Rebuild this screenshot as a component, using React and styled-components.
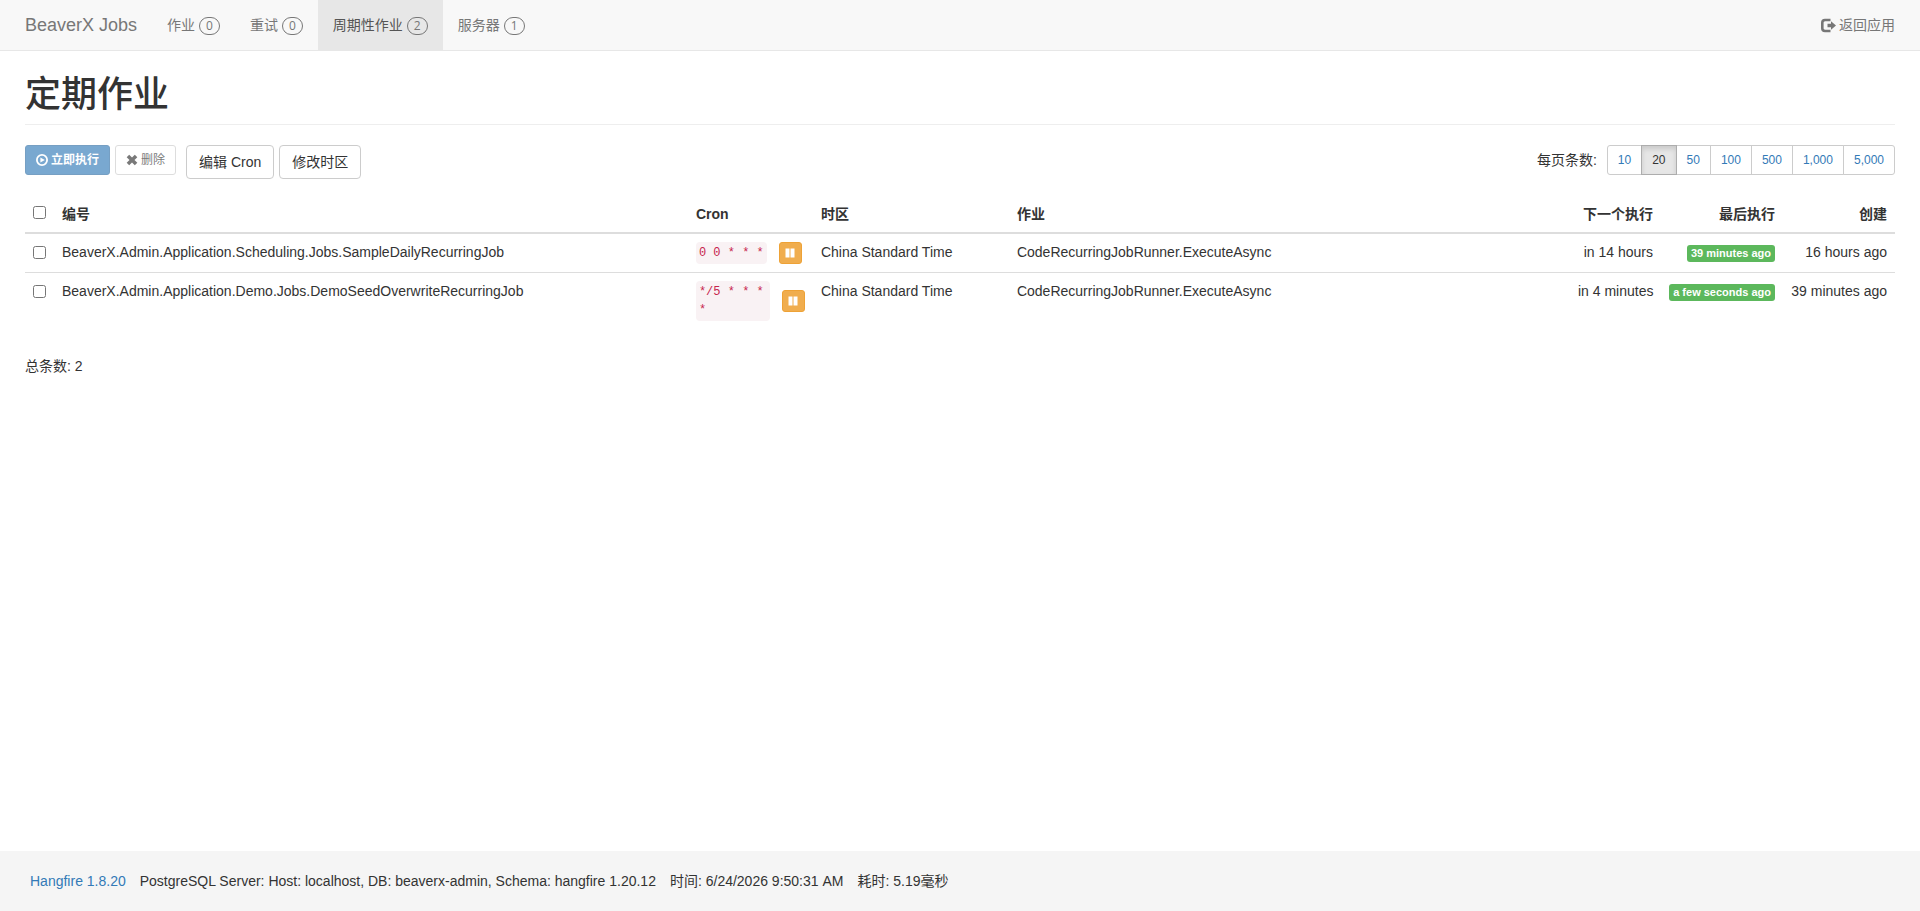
import React, { useState } from "react";
import styled, { createGlobalStyle } from "styled-components";

const navItems = [
  { label: "作业", count: 0 },
  { label: "重试", count: 0 },
  { label: "周期性作业", count: 2, active: true },
  { label: "服务器", count: 1 },
];

const pageSizes = ["10", "20", "50", "100", "500", "1,000", "5,000"];

const jobs = [
  {
    id: "BeaverX.Admin.Application.Scheduling.Jobs.SampleDailyRecurringJob",
    cron: "0 0 * * *",
    timeZone: "China Standard Time",
    job: "CodeRecurringJobRunner.ExecuteAsync",
    next: "in 14 hours",
    last: "39 minutes ago",
    created: "16 hours ago",
  },
  {
    id: "BeaverX.Admin.Application.Demo.Jobs.DemoSeedOverwriteRecurringJob",
    cron: "*/5 * * * *",
    timeZone: "China Standard Time",
    job: "CodeRecurringJobRunner.ExecuteAsync",
    next: "in 4 minutes",
    last: "a few seconds ago",
    created: "39 minutes ago",
  },
];

const PlayCircleIcon = () => (
  <Icon viewBox="0 0 12 12" $size={12} aria-hidden="true">
    <circle cx="6" cy="6" r="5.1" fill="none" stroke="currentColor" strokeWidth="1.8" />
    <path d="M4.4 3.4v5.2L8.8 6z" fill="currentColor" />
  </Icon>
);

const RemoveIcon = () => (
  <Icon viewBox="0 0 12 12" $size={12} aria-hidden="true">
    <path
      d="M3.2 .8 6 3.5 8.800 .8 11.300 3.200 8.500 6 11.300 8.800 8.800 11.200 6 8.500 3.200 11.200 .7 8.800 3.500 6 .7 3.200z"
      fill="currentColor"
    />
  </Icon>
);

const PauseIcon = () => (
  <Icon viewBox="0 0 12 12" $size={12} aria-hidden="true">
    <path d="M1.500 1.500h4v9h-4zM6.500 1.500h4v9h-4z" fill="currentColor" />
  </Icon>
);

const LogOutIcon = () => (
  <Icon viewBox="0 0 15 14" $size={15} aria-hidden="true">
    <path
      d="M9.500 1.500H4A2.700 2.700 0 0 0 1.300 4.200v5.600A2.700 2.700 0 0 0 4 12.500h5.500"
      fill="none"
      stroke="currentColor"
      strokeWidth="2.600"
    />
    <path d="M6.500 5.200h3.500V2.800L15 7l-5 4.200V8.800H6.500z" fill="currentColor" />
  </Icon>
);

const App = () => {
  const [selected, setSelected] = useState([]);
  const [perPage, setPerPage] = useState("20");

  const toggleJob = (id) => {
    setSelected(
      selected.includes(id) ? selected.filter((x) => x !== id) : [...selected, id]
    );
  };

  const toggleAll = () => {
    setSelected(selected.length === jobs.length ? [] : jobs.map((j) => j.id));
  };

  return (
    <Page>
      <GlobalStyle />
      <Navbar>
        <Brand href="#">BeaverX Jobs</Brand>
        <NavList>
          {navItems.map((item) => (
            <li key={item.label}>
              <NavLink href="#" $active={item.active}>
                {item.label}
                <Metric>{item.count}</Metric>
              </NavLink>
            </li>
          ))}
        </NavList>
        <BackLink href="#">
          <LogOutIcon />
          返回应用
        </BackLink>
      </Navbar>

      <Main>
        <Title>定期作业</Title>
        <Toolbar>
          <Group>
            <SmallButton $primary disabled={selected.length === 0}>
              <PlayCircleIcon />
              立即执行
            </SmallButton>
            <SmallButton disabled={selected.length === 0}>
              <RemoveIcon />
              删除
            </SmallButton>
          </Group>
          <Group>
            <Button>编辑 Cron</Button>
            <Button>修改时区</Button>
          </Group>
          <PerPage>
            每页条数:
            <Pager>
              {pageSizes.map((size) => (
                <PageSize
                  href="#"
                  key={size}
                  $active={size === perPage}
                  onClick={() => setPerPage(size)}
                >
                  {size}
                </PageSize>
              ))}
            </Pager>
          </PerPage>
        </Toolbar>

        <Table>
          <colgroup>
            <Col $width="29px" />
            <Col $width="33.9%" />
            <Col $width="125px" />
            <Col $width="196px" />
            <Col />
            <Col $width="91px" />
            <Col $width="122px" />
            <Col $width="112px" />
          </colgroup>
          <thead>
            <tr>
              <Th>
                <Checkbox
                  $head
                  aria-label="全选"
                  checked={selected.length === jobs.length}
                  onChange={toggleAll}
                />
              </Th>
              <Th>编号</Th>
              <Th>Cron</Th>
              <Th>时区</Th>
              <Th>作业</Th>
              <Th $right>下一个执行</Th>
              <Th $right>最后执行</Th>
              <Th $right>创建</Th>
            </tr>
          </thead>
          <tbody>
            {jobs.map((item) => (
              <tr key={item.id}>
                <Td>
                  <Checkbox
                    aria-label={item.id}
                    checked={selected.includes(item.id)}
                    onChange={() => toggleJob(item.id)}
                  />
                </Td>
                <Td>{item.id}</Td>
                <Td>
                  <CronCell>
                    <Code>{item.cron}</Code>
                    <PauseButton aria-label="暂停">
                      <PauseIcon />
                    </PauseButton>
                  </CronCell>
                </Td>
                <Td>{item.timeZone}</Td>
                <Td>{item.job}</Td>
                <Td $right>{item.next}</Td>
                <Td $right>
                  <Label>{item.last}</Label>
                </Td>
                <Td $right>{item.created}</Td>
              </tr>
            ))}
          </tbody>
        </Table>
        <Total>总条数: {jobs.length}</Total>
      </Main>

      <Footer>
        <a href="#">Hangfire 1.8.20</a>
        <span>PostgreSQL Server: Host: localhost, DB: beaverx-admin, Schema: hangfire 1.20.12</span>
        <span>时间: 6/24/2026 9:50:31 AM</span>
        <span>耗时: 5.19毫秒</span>
      </Footer>
    </Page>
  );
};

const GlobalStyle = createGlobalStyle`
  * {
    box-sizing: border-box;
  }

  body {
    margin: 0;
    background-color: #fff;
    color: #333;
    font-family: "Liberation Sans", "Noto Sans CJK SC", sans-serif;
    font-size: 14px;
    line-height: 20px;
  }

  a {
    color: #337ab7;
    text-decoration: none;
  }

  button {
    font-family: inherit;
  }
`;

const Page = styled.div`
  display: flex;
  flex-direction: column;
  min-height: 100vh;
`;

const Icon = styled.svg`
  flex: none;
  width: ${({ $size }) => $size}px;
  height: ${({ $size }) => $size}px;
`;

const Navbar = styled.nav`
  display: flex;
  height: 51px;
  padding: 0 25px;
  background-color: #f8f8f8;
  border-bottom: 1px solid #e7e7e7;
`;

const Brand = styled.a`
  padding: 15px 15px 15px 0;
  color: #777;
  font-size: 18px;
`;

const NavList = styled.ul`
  display: flex;
  margin: 0;
  padding: 0;
  list-style: none;
`;

const NavLink = styled.a`
  display: flex;
  align-items: center;
  gap: 4px;
  height: 50px;
  padding: 0 15px;
  color: ${({ $active }) => ($active ? "#555" : "#777")};
  background-color: ${({ $active }) => ($active ? "#e7e7e7" : "transparent")};
`;

const Metric = styled.span`
  height: 18px;
  margin-top: 2px;
  padding: 0 6px;
  border: 1px solid #777;
  border-radius: 10px;
  color: #777;
  font-family: "Open Sans", sans-serif;
  font-size: 12px;
  line-height: 16px;
  text-align: center;
`;

const BackLink = styled.a`
  display: flex;
  align-items: center;
  gap: 3px;
  margin-left: auto;
  color: #777;
`;

const Main = styled.main`
  flex: 1;
  padding: 24px 25px;
`;

const Title = styled.h1`
  margin: 0 0 20px;
  padding-bottom: 9px;
  border-bottom: 1px solid #eee;
  font-size: 36px;
  font-weight: 500;
  line-height: 40px;
`;

const Toolbar = styled.div`
  display: flex;
  align-items: flex-start;
  gap: 10px;
  margin-bottom: 17px;
`;

const Group = styled.div`
  display: flex;
  align-items: flex-start;
  gap: 5px;
`;

const Button = styled.button`
  padding: 6px 12px;
  background-color: #fff;
  border: 1px solid #ccc;
  border-radius: 4px;
  color: #333;
  font-size: 14px;
  line-height: 20px;
  cursor: pointer;
`;

const SmallButton = styled(Button)`
  display: flex;
  align-items: center;
  gap: 3px;
  padding: 5px 10px;
  border-color: ${({ $primary }) => ($primary ? "#2e6da4" : "#ccc")};
  border-radius: 3px;
  background-color: ${({ $primary }) => ($primary ? "#337ab7" : "#fff")};
  color: ${({ $primary }) => ($primary ? "#fff" : "#333")};
  font-size: 12px;
  font-weight: ${({ $primary }) => ($primary ? "bold" : "normal")};
  line-height: 18px;

  &:disabled {
    opacity: 0.65;
    cursor: not-allowed;
  }
`;

const PerPage = styled.div`
  display: flex;
  align-items: center;
  gap: 10px;
  margin-left: auto;
`;

const Pager = styled.div`
  display: flex;
`;

const PageSize = styled.a`
  position: relative;
  z-index: ${({ $active }) => ($active ? 1 : 0)};
  padding: 5px 10px;
  background-color: ${({ $active }) => ($active ? "#e6e6e6" : "#fff")};
  border: 1px solid ${({ $active }) => ($active ? "#adadad" : "#ccc")};
  box-shadow: ${({ $active }) => ($active ? "inset 0 3px 5px rgba(0, 0, 0, 0.125)" : "none")};
  color: ${({ $active }) => ($active ? "#333" : "#337ab7")};
  font-size: 12px;
  line-height: 18px;

  & + & {
    margin-left: -1px;
  }

  &:first-child {
    border-radius: 3px 0 0 3px;
  }

  &:last-child {
    border-radius: 0 3px 3px 0;
  }
`;

const Table = styled.table`
  width: 100%;
  margin-bottom: 27px;
  border-collapse: separate;
  border-spacing: 0;
  table-layout: fixed;

  tbody tr + tr td {
    border-top: 1px solid #ddd;
  }
`;

const Col = styled.col`
  width: ${({ $width }) => $width || "auto"};
`;

const Th = styled.th`
  padding: 8px;
  border-bottom: 2px solid #ddd;
  text-align: ${({ $right }) => ($right ? "right" : "left")};
  white-space: nowrap;
`;

const Td = styled.td`
  padding: 8px;
  text-align: ${({ $right }) => ($right ? "right" : "left")};
  vertical-align: top;
  white-space: nowrap;
`;

const Checkbox = styled.input.attrs({ type: "checkbox" })`
  display: block;
  width: 13px;
  height: 13px;
  margin: ${({ $head }) => ($head ? "2px 0 5px" : "4px 0 3px")};
`;

const CronCell = styled.div`
  display: flex;
  align-items: center;
  gap: 12px;
`;

const Code = styled.code`
  padding: 2px 3px;
  background-color: #f9f2f4;
  border-radius: 4px;
  color: #c7254e;
  font-family: "Liberation Mono", monospace;
  font-size: 12px;
  line-height: 18px;
  white-space: normal;
`;

const PauseButton = styled.button`
  display: flex;
  flex: none;
  align-items: center;
  justify-content: center;
  width: 23px;
  height: 22px;
  padding: 0;
  background-color: #f0ad4e;
  border: 1px solid #eea236;
  border-radius: 3px;
  color: #fff;
  cursor: pointer;
`;

const Label = styled.span`
  display: inline-block;
  padding: 0 4px;
  background-color: #5cb85c;
  border-radius: 3px;
  color: #fff;
  font-size: 11px;
  font-weight: bold;
  line-height: 17px;
`;

const Total = styled.div`
  color: #333;
`;

const Footer = styled.footer`
  display: flex;
  align-items: center;
  gap: 14px;
  height: 60px;
  padding: 0 30px;
  background-color: #f5f5f5;
`;

export default App;
